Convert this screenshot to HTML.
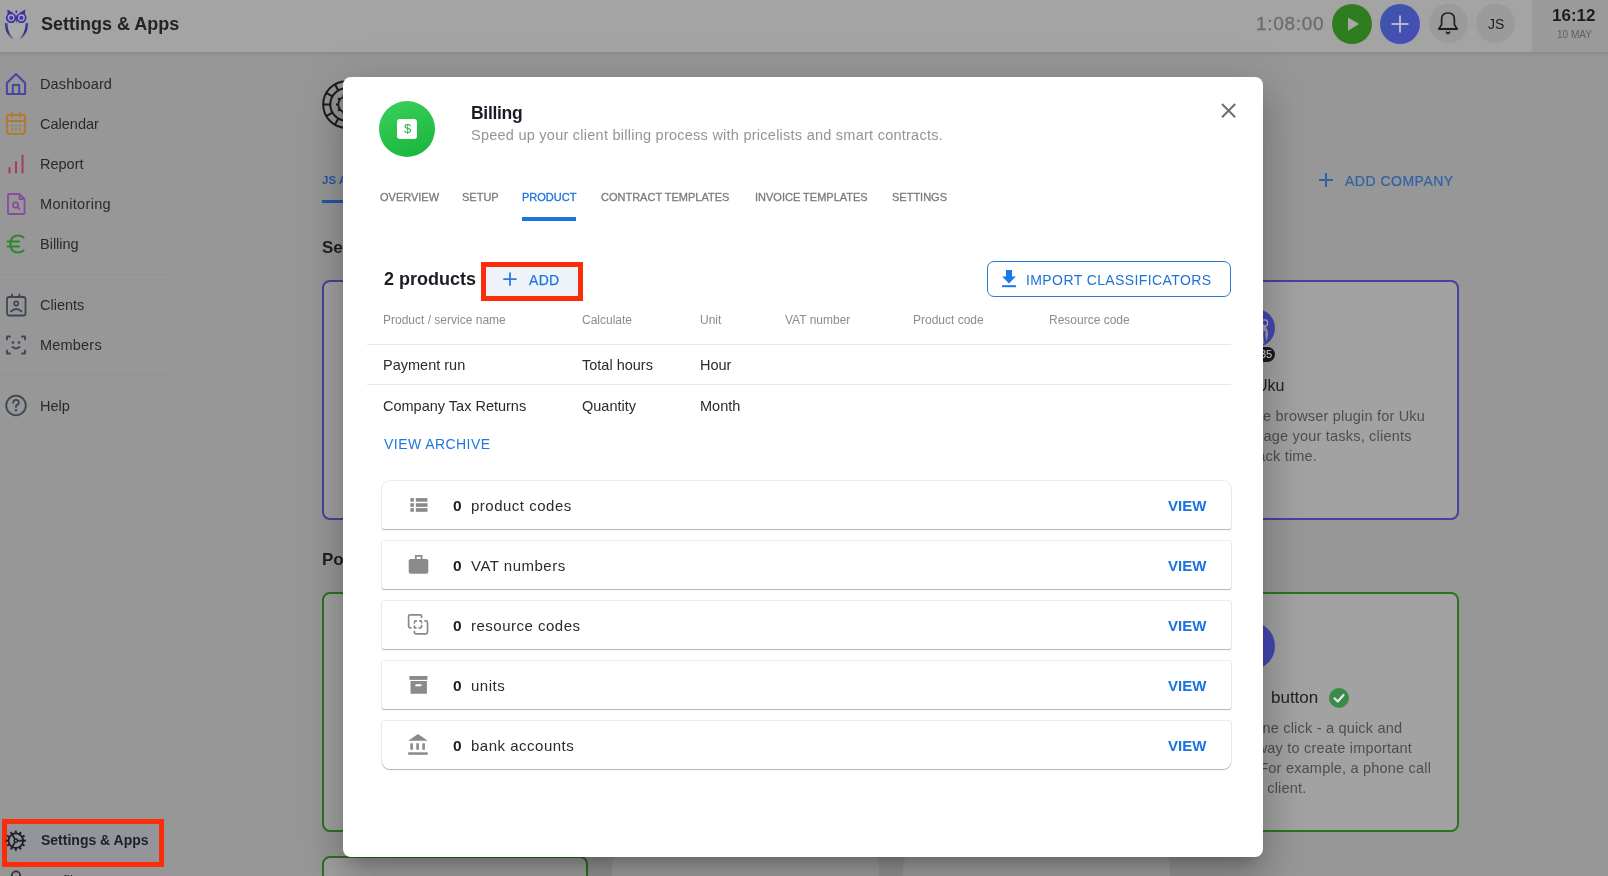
<!DOCTYPE html>
<html><head><meta charset="utf-8"><style>
*{box-sizing:border-box;margin:0;padding:0}
html,body{width:1608px;height:876px;overflow:hidden}
body{font-family:"Liberation Sans",sans-serif;background:#979797;position:relative}
.a{position:absolute}
.t{position:absolute;line-height:0;white-space:nowrap;will-change:transform}
svg{position:absolute;overflow:visible}
</style></head><body>
<div class="a" style="left:0px;top:0px;width:1532px;height:52px;background:#a4a4a4"></div>
<div class="a" style="left:1532px;top:0px;width:76px;height:52px;background:#9a9a9a"></div>
<div class="a" style="left:0px;top:52px;width:1608px;height:6px;background:linear-gradient(rgba(0,0,0,.07),rgba(0,0,0,0))"></div>
<svg style="left:0;top:0" width="34" height="42" viewBox="0 0 34 42">
<defs><linearGradient id="og" x1="0" y1="0" x2="0" y2="1"><stop offset="0" stop-color="#3c48b8"/><stop offset=".55" stop-color="#3a2a78"/><stop offset="1" stop-color="#a85a70"/></linearGradient></defs>
<path d="M7.5,23.5 L25.5,23.5 C24.5,30 21.5,35.5 16.3,39.3 C11,35.5 8,30 7.5,23.5 Z" fill="#a8abaa"/>
<path d="M4.8,23 C4.9,31 8,35.5 12.2,39 L12.9,38.4 C9.6,34.5 7.6,30 7.6,23.3 Z" fill="url(#og)"/>
<path d="M28.2,23 C28.1,31 25,35.5 20.8,39 L20.1,38.4 C23.4,34.5 25.4,30 25.4,23.3 Z" fill="url(#og)"/>
<path d="M7.4,9.6 L13.2,13 L7.6,15.5 Z M25.2,9.6 L19.4,13 L25,15.5 Z" fill="#3b34a0"/>
<path d="M16.3,10 L17.4,11.8 L16.3,13.6 L15.2,11.8 Z" fill="#3b34a0"/>
<circle cx="11.1" cy="17.8" r="4.3" fill="#b2a6c6" stroke="#3b34a0" stroke-width="1.7"/>
<circle cx="21.4" cy="17.8" r="4.3" fill="#b2a6c6" stroke="#3b34a0" stroke-width="1.7"/>
<circle cx="11.2" cy="17.9" r="2.1" fill="#4a3aa8"/><circle cx="21.3" cy="17.9" r="2.1" fill="#4a3aa8"/>
<path d="M15.2,15.5 L17.4,15.5 L16.3,23.8 Z" fill="#3b34a0"/>
</svg>
<div class="t" style="top:24px;font-size:18px;color:#232326;font-weight:bold;left:41px;">Settings &amp; Apps</div>
<div class="t" style="top:24px;font-size:19px;color:#6c6c6c;letter-spacing:0.7px;left:1256px;-webkit-text-stroke:.3px #6c6c6c;">1:08:00</div>
<div class="a" style="left:1332px;top:4px;width:40px;height:40px;border-radius:50%;background:#2f7c21"></div>
<svg style="left:0;top:0" width="1608" height="52"><polygon points="1348,17.4 1359,24 1348,30.8" fill="#a8a8a8"/></svg>
<div class="a" style="left:1380px;top:4px;width:40px;height:40px;border-radius:50%;background:linear-gradient(135deg,#3a58a8,#4b4ab8)"></div>
<svg style="left:0;top:0" width="1608" height="52"><rect x="1391.5" y="23" width="17" height="2" fill="#b2b6d2"/><rect x="1399" y="15.5" width="2" height="17" fill="#b2b6d2"/></svg>
<div class="a" style="left:1429px;top:4px;width:39px;height:39px;border-radius:50%;background:#9b9b9b"></div>
<svg style="left:0;top:0" width="1608" height="52">
<path d="M1438.8,29 L1441.6,24.6 L1441.6,19.2 Q1441.6,13 1448,13 Q1454.4,13 1454.4,19.2 L1454.4,24.6 L1457.2,29 Z" fill="none" stroke="#1e1e1e" stroke-width="1.7" stroke-linejoin="round"/>
<path d="M1438.8,29 L1457.2,29" stroke="#1e1e1e" stroke-width="2.1"/>
<path d="M1446.3,32.2 L1448,33.6 L1449.7,32.2" fill="none" stroke="#1e1e1e" stroke-width="1.6" stroke-linecap="round"/>
</svg>
<div class="a" style="left:1476px;top:4px;width:39px;height:39px;border-radius:50%;background:#9b9b9b"></div>
<div class="t" style="top:24px;font-size:14px;color:#1e1e1e;left:1488px;">JS</div>
<div class="t" style="top:16px;font-size:17px;color:#1d1d1f;font-weight:bold;left:1552px;">16:12</div>
<div class="t" style="top:35px;font-size:10px;color:#5e5e5e;left:1557px;">10 MAY</div>
<div class="t" style="top:84px;font-size:14.5px;color:#2a2a2c;letter-spacing:0.12px;left:40px;">Dashboard</div>
<div class="t" style="top:124px;font-size:14.5px;color:#2a2a2c;left:40px;">Calendar</div>
<div class="t" style="top:164px;font-size:14.5px;color:#2a2a2c;left:40px;">Report</div>
<div class="t" style="top:204px;font-size:14.5px;color:#2a2a2c;letter-spacing:0.33px;left:40px;">Monitoring</div>
<div class="t" style="top:244px;font-size:14.5px;color:#2a2a2c;left:40px;">Billing</div>
<div class="t" style="top:305px;font-size:14.5px;color:#2a2a2c;left:40px;">Clients</div>
<div class="t" style="top:345px;font-size:14.5px;color:#2a2a2c;letter-spacing:0.2px;left:40px;">Members</div>
<div class="t" style="top:406px;font-size:14.5px;color:#2a2a2c;left:40px;">Help</div>
<div class="a" style="left:0px;top:274px;width:168px;height:1px;background:#929292"></div>
<div class="a" style="left:0px;top:374px;width:168px;height:1px;background:#929292"></div>
<svg style="left:0;top:60px" width="40" height="380" viewBox="0 60 40 380">
<g fill="none" stroke-linecap="round" stroke-linejoin="round">
<path d="M6.9,83 L16,74 L25.1,83 L25.1,94.1 L6.9,94.1 Z" stroke="#4646a0" stroke-width="2"/>
<path d="M12.8,94 L12.8,85 L19.2,85 L19.2,94" stroke="#4646a0" stroke-width="2"/>
<rect x="7" y="115" width="18" height="19" rx="2.5" stroke="#b27a32" stroke-width="2"/>
<path d="M7,121 L25,121 M12,113 L12,116.5 M20,113 L20,116.5" stroke="#b27a32" stroke-width="2"/>
<path d="M9.5,172.5 L9.5,168 M16,172.5 L16,162 M22.5,172.5 L22.5,155.5" stroke="#a83c58" stroke-width="2"/>
<path d="M8,195 Q8,194 9,194 L19.5,194 L24.5,199 L24.5,213 Q24.5,214 23.5,214 L9,214 Q8,214 8,213 Z M19.5,194 L19.5,199 L24.5,199" stroke="#8a4aa2" stroke-width="1.8"/>
<circle cx="15.5" cy="205" r="2.6" stroke="#8a4aa2" stroke-width="1.8"/>
<path d="M17.4,207 L19.5,209" stroke="#8a4aa2" stroke-width="1.8"/>
<path d="M23.5,237.5 Q21.5,235.5 18.5,235.5 Q10.5,235.5 10.5,244 Q10.5,252.5 18.5,252.5 Q21.5,252.5 23.5,250.5" stroke="#2f862f" stroke-width="2.2"/>
<path d="M7.5,241.5 L19,241.5 M7.5,246.5 L19,246.5" stroke="#2f862f" stroke-width="2.2"/>
<rect x="7" y="297" width="18.5" height="18.5" rx="2" stroke="#3e4656" stroke-width="1.8"/>
<path d="M12,294.5 L12,297 M19.5,294.5 L19.5,297" stroke="#3e4656" stroke-width="1.8"/>
<circle cx="16.2" cy="303.5" r="2.1" stroke="#3e4656" stroke-width="1.6"/>
<path d="M11,311.5 Q16.2,306.5 21.5,311.5" stroke="#3e4656" stroke-width="1.8"/>
<path d="M7,339.5 L7,336.5 L10,336.5 M22,336.5 L25,336.5 L25,339.5 M25,350.5 L25,353.5 L22,353.5 M10,353.5 L7,353.5 L7,350.5" stroke="#3e4656" stroke-width="1.8"/>
<path d="M12.5,347 Q16,350 19.5,347" stroke="#3e4656" stroke-width="1.8"/>
<circle cx="13" cy="342.5" r=".6" stroke="#3e4656" stroke-width="1.5"/><circle cx="19" cy="342.5" r=".6" stroke="#3e4656" stroke-width="1.5"/>
<circle cx="16" cy="405.5" r="9.8" stroke="#3e4656" stroke-width="1.8"/>
<path d="M13.2,402.8 Q13.2,399.8 16,399.8 Q18.8,399.8 18.8,402.5 Q18.8,404.5 16,405.5 L16,407" stroke="#3e4656" stroke-width="1.8"/>
<circle cx="16" cy="410.3" r=".5" stroke="#3e4656" stroke-width="1.6"/>
</g>
<circle cx="12" cy="125.5" r="1.1" fill="#b27a32"/><circle cx="16" cy="125.5" r="1.1" fill="#b27a32"/><circle cx="20" cy="125.5" r="1.1" fill="#b27a32"/>
<circle cx="12" cy="129.5" r="1.1" fill="#b27a32"/><circle cx="16" cy="129.5" r="1.1" fill="#b27a32"/><circle cx="20" cy="129.5" r="1.1" fill="#b27a32"/>
</svg>
<div class="a" style="left:2px;top:819px;width:162px;height:48px;border:5px solid #fa2c0a;background:#93959a"></div>
<div class="t" style="top:840px;font-size:14px;color:#1f2128;font-weight:bold;left:41px;">Settings &amp; Apps</div>
<svg style="left:0;top:828px" width="32" height="26" viewBox="0 0 32 26">
<g stroke="#1f2229" fill="none">
<circle cx="15.8" cy="12.7" r="7.3" stroke-width="1.8"/>
<circle cx="15.8" cy="12.7" r="1.6" stroke-width="1.5"/>
<path d="M17.4,12.7 L23,12.7" stroke-width="1.8"/>
<path d="M17.4,12.7 L23,12.7" stroke-width="1.8" transform="rotate(120 15.8 12.7)"/>
<path d="M17.4,12.7 L23,12.7" stroke-width="1.8" transform="rotate(240 15.8 12.7)"/>
<g stroke-width="2"><path d="M15.8,2.6 L15.8,5.6" transform="rotate(0 15.8 12.7)"/><path d="M15.8,2.6 L15.8,5.6" transform="rotate(30 15.8 12.7)"/><path d="M15.8,2.6 L15.8,5.6" transform="rotate(60 15.8 12.7)"/><path d="M15.8,2.6 L15.8,5.6" transform="rotate(90 15.8 12.7)"/><path d="M15.8,2.6 L15.8,5.6" transform="rotate(120 15.8 12.7)"/><path d="M15.8,2.6 L15.8,5.6" transform="rotate(150 15.8 12.7)"/><path d="M15.8,2.6 L15.8,5.6" transform="rotate(180 15.8 12.7)"/><path d="M15.8,2.6 L15.8,5.6" transform="rotate(210 15.8 12.7)"/><path d="M15.8,2.6 L15.8,5.6" transform="rotate(240 15.8 12.7)"/><path d="M15.8,2.6 L15.8,5.6" transform="rotate(270 15.8 12.7)"/><path d="M15.8,2.6 L15.8,5.6" transform="rotate(300 15.8 12.7)"/><path d="M15.8,2.6 L15.8,5.6" transform="rotate(330 15.8 12.7)"/></g>
</g></svg>
<svg style="left:0;top:860px" width="40" height="16"><circle cx="16" cy="15.5" r="4.2" fill="none" stroke="#333" stroke-width="1.8"/></svg>
<div class="t" style="top:881px;font-size:14.5px;color:#2a2a2c;left:40px;">Profile</div>
<svg style="left:320px;top:78px" width="56" height="56" viewBox="0 0 56 56">
<g fill="none" stroke="#1c1c1c" stroke-width="2">
<circle cx="26.5" cy="26.5" r="23.3"/><circle cx="26.5" cy="26.5" r="16.2"/>
<path d="M3.2,26.5 L10.3,26.5"/><path d="M3.2,26.5 L10.3,26.5" transform="rotate(30 26.5 26.5)"/><path d="M3.2,26.5 L10.3,26.5" transform="rotate(60 26.5 26.5)"/>
<path d="M3.2,26.5 L10.3,26.5" transform="rotate(-30 26.5 26.5)"/><path d="M3.2,26.5 L10.3,26.5" transform="rotate(-60 26.5 26.5)"/>
<circle cx="26.5" cy="26.5" r="8.2" stroke-width="1.8"/><path d="M16,26.5 L18.3,26.5" transform="rotate(0 26.5 26.5)"/><path d="M16,26.5 L18.3,26.5" transform="rotate(36 26.5 26.5)"/><path d="M16,26.5 L18.3,26.5" transform="rotate(72 26.5 26.5)"/><path d="M16,26.5 L18.3,26.5" transform="rotate(108 26.5 26.5)"/><path d="M16,26.5 L18.3,26.5" transform="rotate(144 26.5 26.5)"/><path d="M16,26.5 L18.3,26.5" transform="rotate(180 26.5 26.5)"/><path d="M16,26.5 L18.3,26.5" transform="rotate(216 26.5 26.5)"/><path d="M16,26.5 L18.3,26.5" transform="rotate(252 26.5 26.5)"/><path d="M16,26.5 L18.3,26.5" transform="rotate(288 26.5 26.5)"/><path d="M16,26.5 L18.3,26.5" transform="rotate(324 26.5 26.5)"/>
</g></svg>
<div class="t" style="top:180px;font-size:11.5px;color:#2a58a8;font-weight:bold;left:322px;">JS ACCOUNTING</div>
<div class="a" style="left:322px;top:200px;width:90px;height:3px;background:#2356a8"></div>
<div class="t" style="top:248px;font-size:17px;color:#1e1e1e;font-weight:bold;left:322px;">Settings</div>
<div class="a" style="left:322px;top:280px;width:1137px;height:240px;border:2px solid #44449c;border-radius:8px;background:#a2a2a2"></div>
<div class="t" style="top:560px;font-size:17px;color:#1e1e1e;font-weight:bold;left:322px;">Popular</div>
<div class="a" style="left:322px;top:592px;width:1137px;height:240px;border:2px solid #2c731f;border-radius:8px;background:#a2a2a2"></div>
<div class="a" style="left:322px;top:856px;width:266px;height:40px;border:2px solid #2c731f;border-radius:8px;background:#a2a2a2"></div>
<div class="a" style="left:612px;top:856px;width:267px;height:40px;border-radius:8px;background:#a2a2a2"></div>
<div class="a" style="left:903px;top:856px;width:267px;height:40px;border-radius:8px;background:#a2a2a2"></div>
<svg style="left:1318px;top:172px" width="16" height="16"><path d="M8,1 L8,15 M1,8 L15,8" stroke="#2f62a8" stroke-width="2"/></svg>
<div class="t" style="top:181px;font-size:14px;color:#2f62a8;letter-spacing:0.5px;left:1345px;-webkit-text-stroke:.2px #2f62a8;">ADD COMPANY</div>
<div class="a" style="left:1237px;top:309px;width:38px;height:38px;border-radius:50%;background:#4646b4"></div>
<svg style="left:1237px;top:309px" width="38" height="38"><ellipse cx="20" cy="25" rx="11" ry="12.5" fill="#9e9eae"/><circle cx="27.5" cy="14" r="3.2" fill="none" stroke="#b8b8c8" stroke-width="1.3"/><path d="M27.5,22 Q27,30 29,35" stroke="#4646b4" stroke-width="2" fill="none"/></svg>
<div class="a" style="left:1240px;top:347px;width:35px;height:15px;border-radius:8px;background:#1b1b1d"></div>
<div class="t" style="top:354px;font-size:11px;color:#e0e0e0;right:336px;text-align:right;">35</div>
<div class="t" style="top:386px;font-size:16px;color:#222;right:324px;text-align:right;">Uku</div>
<div class="t" style="top:416px;font-size:14.5px;color:#4e4e4e;letter-spacing:0.2px;right:183px;text-align:right;">Use the browser plugin for Uku</div>
<div class="t" style="top:436px;font-size:14.5px;color:#4e4e4e;letter-spacing:0.2px;right:196px;text-align:right;">to manage your tasks, clients</div>
<div class="t" style="top:456px;font-size:14.5px;color:#4e4e4e;letter-spacing:0.2px;right:291px;text-align:right;">and track time.</div>
<div class="a" style="left:1227px;top:622px;width:48px;height:48px;border-radius:50%;background:#4646b4"></div>
<div class="t" style="top:698px;font-size:17px;color:#222;right:290px;text-align:right;">Quick action&nbsp; button</div>
<div class="a" style="left:1329px;top:688px;width:20px;height:20px;border-radius:50%;background:#3a8a48"></div>
<svg style="left:1329px;top:688px" width="20" height="20"><path d="M5.5,10.3 L8.8,13.5 L14.5,7" fill="none" stroke="#e8e8e8" stroke-width="2.2" stroke-linecap="round" stroke-linejoin="round"/></svg>
<div class="t" style="top:728px;font-size:14.5px;color:#4e4e4e;letter-spacing:0.2px;right:206px;text-align:right;">One click - a quick and</div>
<div class="t" style="top:748px;font-size:14.5px;color:#4e4e4e;letter-spacing:0.2px;right:196px;text-align:right;">easy way to create important</div>
<div class="t" style="top:768px;font-size:14.5px;color:#4e4e4e;letter-spacing:0.2px;right:177px;text-align:right;">tasks. For example, a phone call</div>
<div class="t" style="top:788px;font-size:14.5px;color:#4e4e4e;letter-spacing:0.2px;right:302px;text-align:right;">to a client.</div>
<div class="a" style="left:343px;top:77px;width:920px;height:780px;background:#fff;border-radius:8px;box-shadow:0 11px 15px -7px rgba(0,0,0,.2),0 24px 38px 3px rgba(0,0,0,.14),0 9px 46px 8px rgba(0,0,0,.12)"></div>
<div class="a" style="left:379px;top:101px;width:56px;height:56px;border-radius:50%;background:linear-gradient(160deg,#3bcf5c,#17b53b)"></div>
<div class="a" style="left:397px;top:119px;width:20px;height:20px;border-radius:3px;background:#fff"></div>
<div class="t" style="top:129px;font-size:13px;color:#28b043;left:403.5px;">$</div>
<div class="t" style="top:113px;font-size:17.5px;color:#1c1c28;font-weight:bold;letter-spacing:-0.3px;left:471px;">Billing</div>
<div class="t" style="top:135px;font-size:14.5px;color:#949494;letter-spacing:0.25px;left:471px;">Speed up your client billing process with pricelists and smart contracts.</div>
<svg style="left:1220px;top:102px" width="18" height="18"><path d="M2,2 L15.2,15.2 M15.2,2 L2,15.2" stroke="#6b6f78" stroke-width="2"/></svg>
<div class="t" style="top:197px;font-size:11px;color:#7b7b7b;left:379.5px;-webkit-text-stroke:.3px #7b7b7b;">OVERVIEW</div>
<div class="t" style="top:197px;font-size:11px;color:#7b7b7b;left:461.5px;-webkit-text-stroke:.3px #7b7b7b;">SETUP</div>
<div class="t" style="top:197px;font-size:11px;color:#1a73e0;left:522px;-webkit-text-stroke:.3px #1a73e0;">PRODUCT</div>
<div class="t" style="top:197px;font-size:11px;color:#7b7b7b;left:600.5px;-webkit-text-stroke:.3px #7b7b7b;">CONTRACT TEMPLATES</div>
<div class="t" style="top:197px;font-size:11px;color:#7b7b7b;left:754.5px;-webkit-text-stroke:.3px #7b7b7b;">INVOICE TEMPLATES</div>
<div class="t" style="top:197px;font-size:11px;color:#7b7b7b;left:892px;-webkit-text-stroke:.3px #7b7b7b;">SETTINGS</div>
<div class="a" style="left:522px;top:217px;width:54px;height:4px;background:#1a73e0"></div>
<div class="t" style="top:279px;font-size:18px;color:#1c1c24;font-weight:bold;left:383.5px;">2 products</div>
<div class="a" style="left:481px;top:262px;width:102px;height:39px;border:5px solid #fa2c0a;background:#eef3fa"></div>
<svg style="left:502px;top:271px" width="16" height="16"><path d="M8,1.5 L8,14.8 M1.3,8.2 L14.6,8.2" stroke="#2a7ae2" stroke-width="1.8"/></svg>
<div class="t" style="top:280px;font-size:14px;color:#2274de;letter-spacing:0.3px;left:529px;-webkit-text-stroke:.25px #2274de;">ADD</div>
<div class="a" style="left:987px;top:261px;width:244px;height:36px;border:1px solid #2a7ad2;border-radius:7px"></div>
<svg style="left:1001px;top:269px" width="16" height="20" viewBox="0 0 16 20">
<path d="M5,1 L11,1 L11,7.5 L14.8,7.5 L8,14.5 L1.2,7.5 L5,7.5 Z" fill="#1a78e8"/><rect x="1" y="16.2" width="14" height="2" fill="#1a78e8"/></svg>
<div class="t" style="top:280px;font-size:14px;color:#1a73d8;letter-spacing:0.4px;left:1026px;">IMPORT CLASSIFICATORS</div>
<div class="t" style="top:320px;font-size:12px;color:#8c8c8c;left:383px;">Product / service name</div>
<div class="t" style="top:320px;font-size:12px;color:#8c8c8c;left:582px;">Calculate</div>
<div class="t" style="top:320px;font-size:12px;color:#8c8c8c;left:700px;">Unit</div>
<div class="t" style="top:320px;font-size:12px;color:#8c8c8c;left:785px;">VAT number</div>
<div class="t" style="top:320px;font-size:12px;color:#8c8c8c;left:913px;">Product code</div>
<div class="t" style="top:320px;font-size:12px;color:#8c8c8c;left:1049px;">Resource code</div>
<div class="a" style="left:367px;top:344px;width:864px;height:1px;background:#e8e8e8"></div>
<div class="a" style="left:367px;top:384px;width:864px;height:1px;background:#e8e8e8"></div>
<div class="t" style="top:365px;font-size:14.5px;color:#2b2b2e;left:383px;">Payment run</div>
<div class="t" style="top:365px;font-size:14.5px;color:#2b2b2e;left:582px;">Total hours</div>
<div class="t" style="top:365px;font-size:14.5px;color:#2b2b2e;left:700px;">Hour</div>
<div class="t" style="top:406px;font-size:14.5px;color:#2b2b2e;left:383px;">Company Tax Returns</div>
<div class="t" style="top:406px;font-size:14.5px;color:#2b2b2e;left:582px;">Quantity</div>
<div class="t" style="top:406px;font-size:14.5px;color:#2b2b2e;left:700px;">Month</div>
<div class="t" style="top:444px;font-size:14px;color:#1f77dc;letter-spacing:0.45px;left:383.5px;">VIEW ARCHIVE</div>
<div class="a" style="left:382px;top:481px;width:849px;height:48px;background:#fff;border-radius:8px 8px 2px 2px;box-shadow:0 1px 0 0 rgba(0,0,0,.17),0 0 0 1px rgba(0,0,0,.07),0 1px 2px rgba(0,0,0,.08)"></div>
<div class="t" style="top:506px;font-size:15.5px;color:#1c1c24;font-weight:bold;left:452.5px;">0</div>
<div class="t" style="top:506px;font-size:15px;color:#2b2b2e;letter-spacing:0.5px;left:471px;">product codes</div>
<div class="t" style="top:506px;font-size:15px;color:#1a73e0;font-weight:bold;left:1167.5px;">VIEW</div>
<div class="a" style="left:382px;top:541px;width:849px;height:48px;background:#fff;border-radius:2px;box-shadow:0 1px 0 0 rgba(0,0,0,.17),0 0 0 1px rgba(0,0,0,.07),0 1px 2px rgba(0,0,0,.08)"></div>
<div class="t" style="top:566px;font-size:15.5px;color:#1c1c24;font-weight:bold;left:452.5px;">0</div>
<div class="t" style="top:566px;font-size:15px;color:#2b2b2e;letter-spacing:0.5px;left:471px;">VAT numbers</div>
<div class="t" style="top:566px;font-size:15px;color:#1a73e0;font-weight:bold;left:1167.5px;">VIEW</div>
<div class="a" style="left:382px;top:601px;width:849px;height:48px;background:#fff;border-radius:2px;box-shadow:0 1px 0 0 rgba(0,0,0,.17),0 0 0 1px rgba(0,0,0,.07),0 1px 2px rgba(0,0,0,.08)"></div>
<div class="t" style="top:626px;font-size:15.5px;color:#1c1c24;font-weight:bold;left:452.5px;">0</div>
<div class="t" style="top:626px;font-size:15px;color:#2b2b2e;letter-spacing:0.5px;left:471px;">resource codes</div>
<div class="t" style="top:626px;font-size:15px;color:#1a73e0;font-weight:bold;left:1167.5px;">VIEW</div>
<div class="a" style="left:382px;top:661px;width:849px;height:48px;background:#fff;border-radius:2px;box-shadow:0 1px 0 0 rgba(0,0,0,.17),0 0 0 1px rgba(0,0,0,.07),0 1px 2px rgba(0,0,0,.08)"></div>
<div class="t" style="top:686px;font-size:15.5px;color:#1c1c24;font-weight:bold;left:452.5px;">0</div>
<div class="t" style="top:686px;font-size:15px;color:#2b2b2e;letter-spacing:0.5px;left:471px;">units</div>
<div class="t" style="top:686px;font-size:15px;color:#1a73e0;font-weight:bold;left:1167.5px;">VIEW</div>
<div class="a" style="left:382px;top:721px;width:849px;height:48px;background:#fff;border-radius:2px 2px 8px 8px;box-shadow:0 1px 0 0 rgba(0,0,0,.17),0 0 0 1px rgba(0,0,0,.07),0 1px 2px rgba(0,0,0,.08)"></div>
<div class="t" style="top:746px;font-size:15.5px;color:#1c1c24;font-weight:bold;left:452.5px;">0</div>
<div class="t" style="top:746px;font-size:15px;color:#2b2b2e;letter-spacing:0.5px;left:471px;">bank accounts</div>
<div class="t" style="top:746px;font-size:15px;color:#1a73e0;font-weight:bold;left:1167.5px;">VIEW</div>
<svg style="left:0;top:0" width="1608" height="876">
<g fill="#8a8a8a">
<rect x="410.4" y="498.1" width="3.5" height="3.6"/><rect x="415.8" y="498.1" width="11.7" height="3.6"/>
<rect x="410.4" y="503.2" width="3.5" height="3.7"/><rect x="415.8" y="503.2" width="11.7" height="3.7"/>
<rect x="410.4" y="508.1" width="3.5" height="3.7"/><rect x="415.8" y="508.1" width="11.7" height="3.7"/>
<rect x="408.7" y="559" width="19.6" height="14.7" rx="2"/>
<rect x="409.4" y="676" width="18" height="3.9"/>
<path d="M410.5,681 L426.9,681 L426.9,693.8 L410.5,693.8 Z M415.4,684.2 L415.4,686.2 L421.5,686.2 L421.5,684.2 Z" fill-rule="evenodd"/>
<path d="M408.2,740.7 L418,734.1 L427.7,740.7 Z"/>
<rect x="410.3" y="743.3" width="2.6" height="6.5"/><rect x="416.3" y="743.3" width="2.6" height="6.5"/><rect x="422.3" y="743.3" width="2.6" height="6.5"/>
<rect x="408.2" y="752.3" width="19.5" height="2.5"/>
</g>
<g fill="none" stroke="#8a8a8a" stroke-width="1.7">
<path d="M415.8,559 L415.8,555.8 L421.6,555.8 L421.6,559"/>
<g stroke-linejoin="round" stroke-linecap="round">
<path d="M421.6,617.3 L421.6,616.3 Q421.6,614.8 420.1,614.8 L410.1,614.8 Q408.6,614.8 408.6,616.3 L408.6,626.3 Q408.6,627.8 410.1,627.8 L411,627.8"/>
<path d="M425,620.9 L426,620.9 Q427.5,620.9 427.5,622.4 L427.5,632.3 Q427.5,633.8 426,633.8 L415.9,633.8 Q414.4,633.8 414.4,632.3 L414.4,631.3"/>
<path d="M414.4,622.8 L414.4,622.2 Q414.4,620.9 415.7,620.9 L416.3,620.9"/>
<path d="M419.8,620.9 L420.4,620.9 Q421.6,620.9 421.6,622.2 L421.6,622.6"/>
<path d="M414.4,626 L414.4,627.8 L416,627.8"/>
<path d="M419.2,627.8 L420.4,627.8 Q421.6,627.8 421.6,626.6 L421.6,625.6"/>
</g>
</g>
</svg>
</body></html>
